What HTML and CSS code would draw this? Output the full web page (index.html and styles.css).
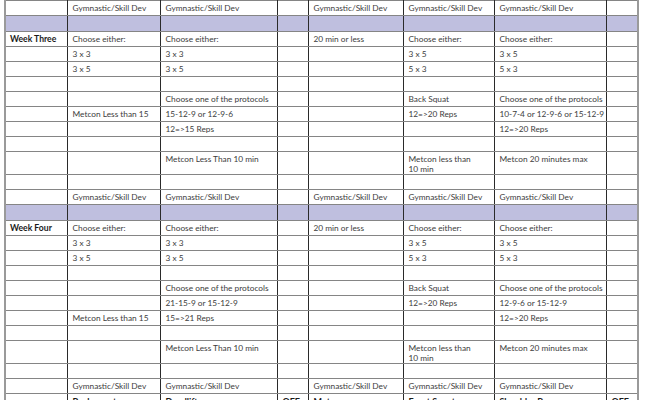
FILE: index.html
```html
<!DOCTYPE html>
<html>
<head>
<meta charset="utf-8">
<link rel="stylesheet" href="styles.css">
</head>
<body>
<table class="plan">
<colgroup>
<col class="c1"><col class="c2"><col class="c3"><col class="c4"><col class="c5"><col class="c6"><col class="c7"><col class="c8">
</colgroup>
<tbody>
<tr class="first"><td></td><td>Gymnastic/Skill Dev</td><td>Gymnastic/Skill Dev</td><td></td><td>Gymnastic/Skill Dev</td><td>Gymnastic/Skill Dev</td><td>Gymnastic/Skill Dev</td><td></td></tr>
<tr class="band"><td></td><td></td><td></td><td></td><td></td><td></td><td></td><td></td></tr>
<tr><td class="week">Week Three</td><td>Choose either:</td><td>Choose either:</td><td></td><td>20 min or less</td><td>Choose either:</td><td>Choose either:</td><td></td></tr>
<tr><td></td><td>3 x 3</td><td>3 x 3</td><td></td><td></td><td>3 x 5</td><td>3 x 5</td><td></td></tr>
<tr><td></td><td>3 x 5</td><td>3 x 5</td><td></td><td></td><td>5 x 3</td><td>5 x 3</td><td></td></tr>
<tr><td></td><td></td><td></td><td></td><td></td><td></td><td></td><td></td></tr>
<tr><td></td><td></td><td>Choose one of the protocols</td><td></td><td></td><td>Back Squat</td><td>Choose one of the protocols</td><td></td></tr>
<tr><td></td><td>Metcon Less than 15</td><td>15-12-9 or 12-9-6</td><td></td><td></td><td>12=&gt;20 Reps</td><td>10-7-4 or 12-9-6 or 15-12-9</td><td></td></tr>
<tr><td></td><td></td><td>12=&gt;15 Reps</td><td></td><td></td><td></td><td>12=&gt;20 Reps</td><td></td></tr>
<tr><td></td><td></td><td></td><td></td><td></td><td></td><td></td><td></td></tr>
<tr class="tall"><td></td><td></td><td>Metcon Less Than 10 min</td><td></td><td></td><td>Metcon less than<br>10 min</td><td>Metcon 20 minutes max</td><td></td></tr>
<tr><td></td><td></td><td></td><td></td><td></td><td></td><td></td><td></td></tr>
<tr><td></td><td>Gymnastic/Skill Dev</td><td>Gymnastic/Skill Dev</td><td></td><td>Gymnastic/Skill Dev</td><td>Gymnastic/Skill Dev</td><td>Gymnastic/Skill Dev</td><td></td></tr>
<tr class="band"><td></td><td></td><td></td><td></td><td></td><td></td><td></td><td></td></tr>
<tr><td class="week">Week Four</td><td>Choose either:</td><td>Choose either:</td><td></td><td>20 min or less</td><td>Choose either:</td><td>Choose either:</td><td></td></tr>
<tr><td></td><td>3 x 3</td><td>3 x 3</td><td></td><td></td><td>3 x 5</td><td>3 x 5</td><td></td></tr>
<tr><td></td><td>3 x 5</td><td>3 x 5</td><td></td><td></td><td>5 x 3</td><td>5 x 3</td><td></td></tr>
<tr><td></td><td></td><td></td><td></td><td></td><td></td><td></td><td></td></tr>
<tr><td></td><td></td><td>Choose one of the protocols</td><td></td><td></td><td>Back Squat</td><td>Choose one of the protocols</td><td></td></tr>
<tr><td></td><td></td><td>21-15-9 or 15-12-9</td><td></td><td></td><td>12=&gt;20 Reps</td><td>12-9-6 or 15-12-9</td><td></td></tr>
<tr><td></td><td>Metcon Less than 15</td><td>15=&gt;21 Reps</td><td></td><td></td><td></td><td>12=&gt;20 Reps</td><td></td></tr>
<tr><td></td><td></td><td></td><td></td><td></td><td></td><td></td><td></td></tr>
<tr class="tall"><td></td><td></td><td>Metcon Less Than 10 min</td><td></td><td></td><td>Metcon less than<br>10 min</td><td>Metcon 20 minutes max</td><td></td></tr>
<tr><td></td><td></td><td></td><td></td><td></td><td></td><td></td><td></td></tr>
<tr><td></td><td>Gymnastic/Skill Dev</td><td>Gymnastic/Skill Dev</td><td></td><td>Gymnastic/Skill Dev</td><td>Gymnastic/Skill Dev</td><td>Gymnastic/Skill Dev</td><td></td></tr>
<tr class="head"><td></td><td>Back squat</td><td>Deadlift</td><td>OFF</td><td>Metcon</td><td>Front Squat</td><td>Shoulder Press</td><td>OFF</td></tr>
</tbody>
</table>
</body>
</html>
```

FILE: styles.css
```css
html, body {
  margin: 0;
  padding: 0;
  background: #ffffff;
  overflow: hidden;
}

body {
  font-family: Lato, "Open Sans", "Liberation Sans", sans-serif;
  font-size: 8.3px;
  color: #3c3c3c;
}

.plan {
  margin-left: 4px;
  margin-top: 0;
  border-collapse: collapse;
  table-layout: fixed;
  width: 633px;
}

.c1 { width: 62px; }
.c2 { width: 93px; }
.c3 { width: 117px; }
.c4 { width: 31px; }
.c5 { width: 95px; }
.c6 { width: 91px; }
.c7 { width: 112px; }
.c8 { width: 32px; }

.plan td {
  height: 14px;
  padding: 0 0 0 5px;
  line-height: 14px;
  vertical-align: top;
  white-space: nowrap;
  overflow: hidden;
  border-top: 1px solid #858585;
  border-bottom: 1px solid #858585;
  border-left: 1px solid #2a2a2a;
  border-right: 1px solid #2a2a2a;
}

.plan td:first-child {
  border-left: 2px solid #9a9a9a;
  padding-left: 4px;
}

.plan td:last-child {
  border-right: 2px solid #9a9a9a;
}

.plan .band td {
  background: #bfbfdf;
  height: 15px;
}

.plan .tall td {
  height: 23px;
  line-height: 9.5px;
  padding-top: 3px;
  box-sizing: border-box;
}

.plan .week {
  font-weight: bold;
  color: #1a1a1a;
  font-size: 8.6px;
}

.plan .head td {
  font-weight: bold;
  color: #1a1a1a;
  font-size: 9px;
  padding-top: 2px;
  line-height: 12px;
}
```
